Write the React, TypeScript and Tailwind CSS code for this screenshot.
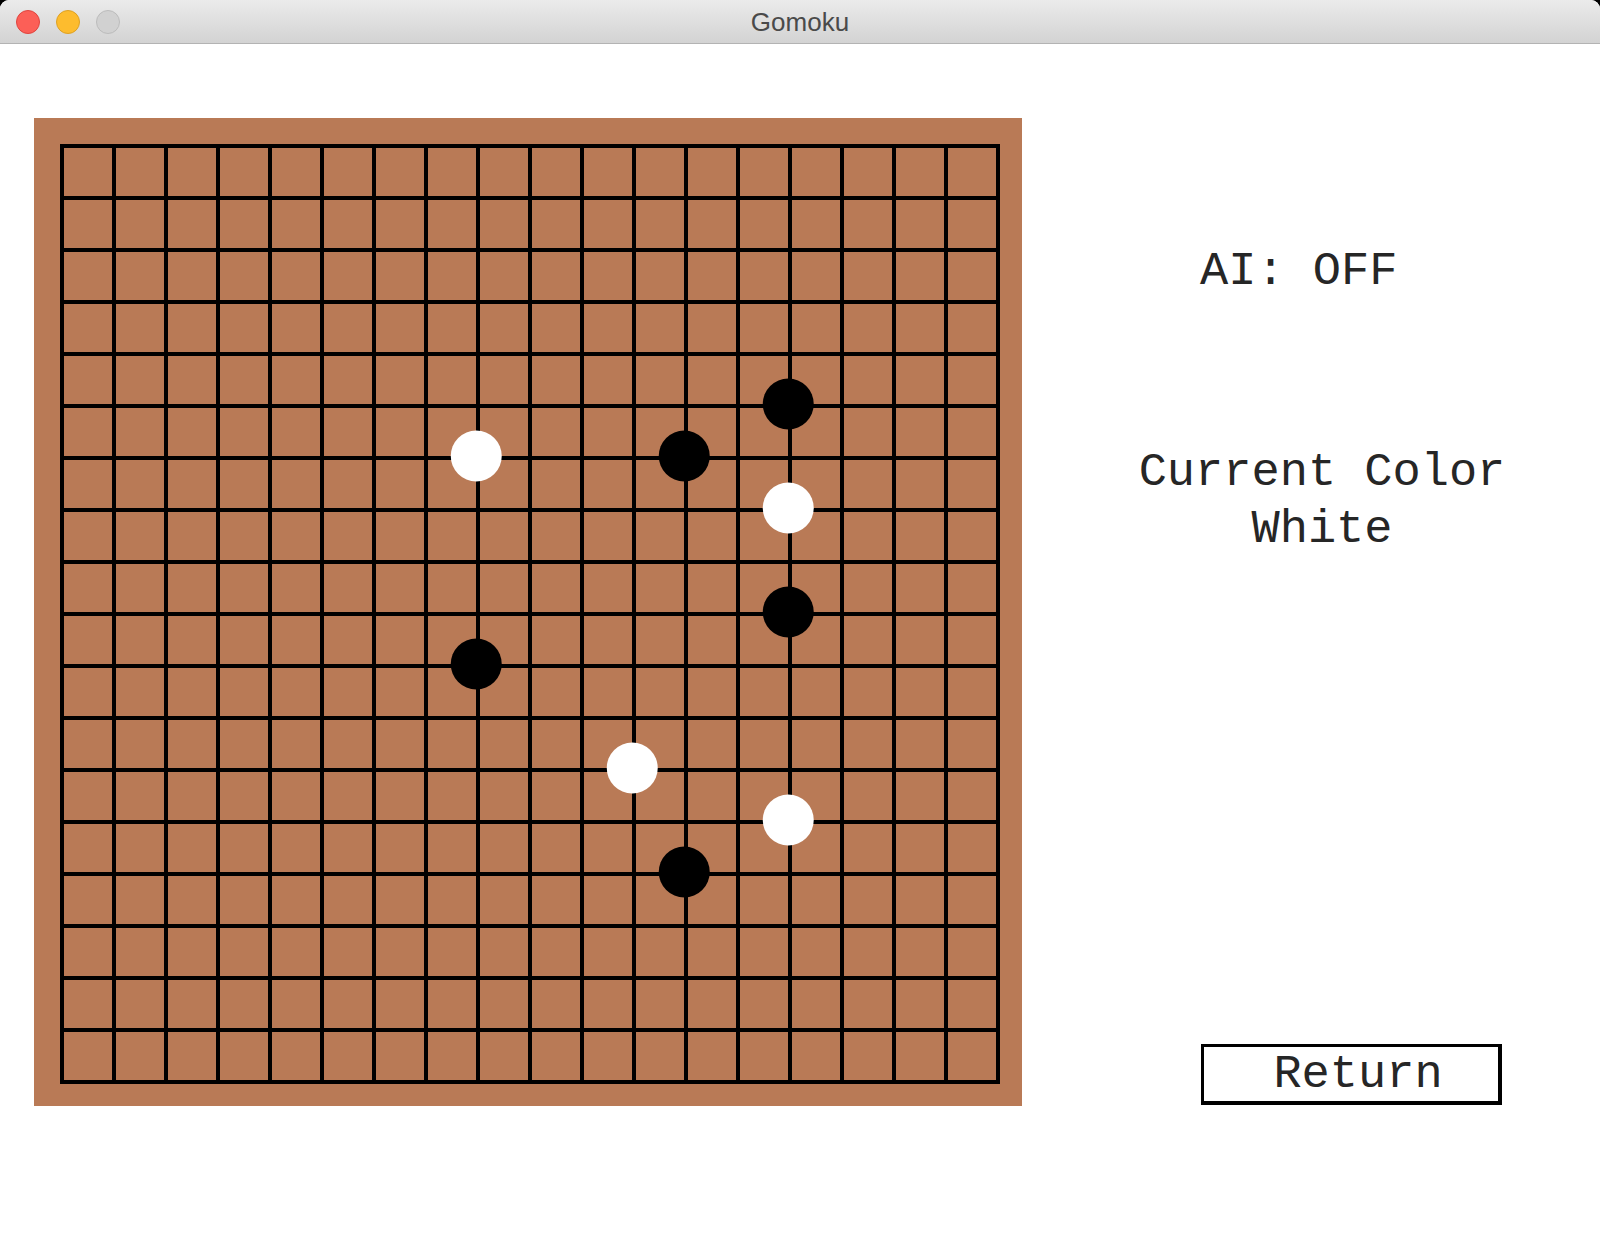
import React from 'react';

type Stone = { c: number; r: number; color: 'black' | 'white' };

const stones: Stone[] = [
  { c: 8, r: 6, color: 'white' },
  { c: 12, r: 6, color: 'black' },
  { c: 14, r: 5, color: 'black' },
  { c: 14, r: 7, color: 'white' },
  { c: 14, r: 9, color: 'black' },
  { c: 8, r: 10, color: 'black' },
  { c: 11, r: 12, color: 'white' },
  { c: 14, r: 13, color: 'white' },
  { c: 12, r: 14, color: 'black' },
];

const CELL = 52;
const LINES = 19;
const LINE_W = 4;
const SIZE = CELL * (LINES - 1) + LINE_W;

const Board: React.FC = () => {
  const idx = Array.from({ length: LINES }, (_, i) => i);
  return (
    <div className="bg-[#b97a56] pt-[26px] pl-[26px] pr-[22px] pb-[22px]">
      <svg width={SIZE} height={SIZE} viewBox={`0 0 ${SIZE} ${SIZE}`} className="block">
        {idx.map((i) => (
          <rect key={`v${i}`} x={i * CELL} y={0} width={LINE_W} height={SIZE} fill="#000" shapeRendering="crispEdges" />
        ))}
        {idx.map((i) => (
          <rect key={`h${i}`} x={0} y={i * CELL} width={SIZE} height={LINE_W} fill="#000" shapeRendering="crispEdges" />
        ))}
        {stones.map((s, i) => (
          <circle
            key={i}
            cx={s.c * CELL + 0.25}
            cy={s.r * CELL}
            r={25.5}
            fill={s.color === 'black' ? '#000' : '#fff'}
          />
        ))}
      </svg>
    </div>
  );
};

const TitleBar: React.FC = () => (
  <div className="relative flex items-center h-[44px] border-b border-[#b3b3b3] bg-gradient-to-b from-[#ebebeb] to-[#d3d3d3] rounded-t-[9px]">
    <div className="flex items-center gap-[16px] pl-[16px]">
      <span className="w-[24px] h-[24px] rounded-full bg-[#fc5f57] border border-[#e0443e]" />
      <span className="w-[24px] h-[24px] rounded-full bg-[#fdbc2e] border border-[#dea123]" />
      <span className="w-[24px] h-[24px] rounded-full bg-[#d1d1d1] border border-[#bcbcbc]" />
    </div>
    <div className="absolute inset-0 flex items-center justify-center pointer-events-none">
      <span className="text-[26px] text-[#4a4a4a] font-['Liberation_Sans',Arial,sans-serif] leading-none">Gomoku</span>
    </div>
  </div>
);

export default function App() {
  return (
    <div className="w-[1600px] h-[1244px] bg-black">
      <div className="w-full h-full bg-white rounded-t-[9px] flex flex-col">
        <TitleBar />
        <div className="flex pt-[74px] pl-[34px] font-['Liberation_Mono','Courier_New',monospace] text-[47px] text-[#262626]">
          <Board />
          <div className="flex flex-col">
            <div className="mt-[125px] ml-[178px] leading-[57px] whitespace-pre">AI: OFF</div>
            <div className="mt-[144px] ml-[100px] w-[400px] text-center leading-[57px]">
              <div>Current Color</div>
              <div>White</div>
            </div>
            <button className="mt-[486px] ml-[179px] w-[301px] h-[61px] border-[3px] border-r-4 border-b-4 border-black bg-white leading-[53px] text-center pl-[14px]">
              Return
            </button>
          </div>
        </div>
      </div>
    </div>
  );
}
